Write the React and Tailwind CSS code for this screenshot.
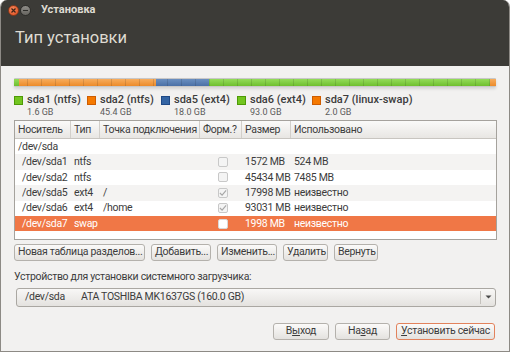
import React from 'react';

const font = { fontFamily: 'Roboto, "Noto Sans", sans-serif' };

const segments = [
  { w: 5, cls: 'bg-[linear-gradient(#94dc5a,#6fbf2e)]' },
  { w: 137, cls: 'bg-[linear-gradient(#f7ad5e,#ec8b2a)]' },
  { w: 53, cls: 'bg-[linear-gradient(#6b8fc0,#4a70a6)]' },
  { w: 281, cls: 'bg-[linear-gradient(#94dc5a,#6fbf2e)]' },
  { w: 6, cls: 'bg-[linear-gradient(#f7ad5e,#ec8b2a)]' },
];

const legend = [
  { name: 'sda1 (ntfs)', size: '1.6 GB', sq: 'bg-[#73c520] border-[#4e9a06]', w: 'w-[73px]' },
  { name: 'sda2 (ntfs)', size: '45.4 GB', sq: 'bg-[#f57900] border-[#ce5c00]', w: 'w-[74px]' },
  { name: 'sda5 (ext4)', size: '18.0 GB', sq: 'bg-[#3465a4] border-[#204a87]', w: 'w-[76px]' },
  { name: 'sda6 (ext4)', size: '93.0 GB', sq: 'bg-[#73c520] border-[#4e9a06]', w: 'w-[75px]' },
  { name: 'sda7 (linux-swap)', size: '2.0 GB', sq: 'bg-[#f57900] border-[#ce5c00]', w: 'w-[110px]' },
];

const rows = [
  { dev: '/dev/sda', top: true },
  { dev: '/dev/sda1', type: 'ntfs', mount: '', fmt: false, size: '1572 MB', used: '524 MB', stripe: true },
  { dev: '/dev/sda2', type: 'ntfs', mount: '', fmt: false, size: '45434 MB', used: '7485 MB' },
  { dev: '/dev/sda5', type: 'ext4', mount: '/', fmt: true, size: '17998 MB', used: 'неизвестно', stripe: true },
  { dev: '/dev/sda6', type: 'ext4', mount: '/home', fmt: true, size: '93031 MB', used: 'неизвестно' },
  { dev: '/dev/sda7', type: 'swap', mount: '', fmt: false, size: '1998 MB', used: 'неизвестно', sel: true },
];

const cols = 'grid grid-cols-[56px_29px_100px_42px_49px_1fr]';

function Check({ checked, sel }) {
  return (
    <div className={`w-[10px] h-[10px] rounded-[2px] border ${sel ? 'bg-white border-[#d8d8d8]' : 'bg-[#f4f4f4] border-[#c8c8c8]'} flex items-center justify-center`}>
      {checked && (
        <svg width="9" height="8" viewBox="0 0 9 8">
          <path d="M1 4 L3.5 6.5 L8 1" stroke="#a8a8a8" strokeWidth="1.3" fill="none" />
        </svg>
      )}
    </div>
  );
}

function Btn({ children, className = '' }) {
  return (
    <button className={`h-[17px] px-[3px] rounded-[3px] border border-[#b4b1ac] bg-[linear-gradient(#fbfaf9,#e4e2df)] text-[10.5px] leading-none text-[#3c3c3c] whitespace-nowrap ${className}`}>
      {children}
    </button>
  );
}

export default function App() {
  return (
    <div style={font} className="w-[510px] h-[352px] overflow-hidden rounded-t-[7px] bg-[#f2f1f0] border-x border-b border-[#8d8a85] flex flex-col tracking-[-0.3px]">
      {/* header */}
      <div className="h-[66px] bg-[#3c3b37] px-[7px] shrink-0">
        <div className="flex items-center h-[20px] pt-[1px]">
          <div className="w-[11px] h-[11px] rounded-full bg-[radial-gradient(circle_at_40%_35%,#f6895d,#df4b1c)] border border-[#8a3a1c] flex items-center justify-center">
            <svg width="5" height="5" viewBox="0 0 5 5"><path d="M0.5 0.5 L4.5 4.5 M4.5 0.5 L0.5 4.5" stroke="#3c2418" strokeWidth="1.2" /></svg>
          </div>
          <div className="w-[11px] h-[11px] ml-[1px] rounded-full bg-[linear-gradient(#8f8d88,#66645f)] border border-[#2f2e2b] flex items-center justify-center">
            <div className="w-[5px] h-[1.5px] bg-[#2e2d2a]" />
          </div>
          <span className="ml-[10px] text-[11px] font-bold text-[#dfdbd2] tracking-normal">Установка</span>
        </div>
        <div className="mt-[10px] ml-[7px] text-[16.5px] leading-none text-[#dfdbd2] tracking-normal">Тип установки</div>
      </div>

      {/* body */}
      <div className="px-[13px] flex flex-col">
        {/* partition bar */}
        <div className="mt-[12px] h-[9px] w-[482px] flex rounded-[1px] overflow-hidden border-y border-[#8a8a8a]/40 shadow-[0_2px_3px_rgba(0,0,0,0.12)] relative">
          {segments.map((s, i) => (
            <div key={i} className={`h-full ${s.cls}`} style={{ width: s.w }} />
          ))}
          <div className="absolute inset-0 bg-[repeating-linear-gradient(90deg,transparent_0,transparent_13px,rgba(0,0,0,0.12)_13px,rgba(0,0,0,0.12)_14px)]" />
        </div>

        {/* legend */}
        <div className="flex mt-[6px] h-[25px]">
          {legend.map((l, i) => (
            <div key={i} className={`flex ${l.w} shrink-0`}>
              <div className={`w-[9px] h-[9px] mt-[3px] border ${l.sq}`} />
              <div className="ml-[4px]">
                <div className="text-[11px] leading-[14px] font-medium text-[#3c3c3c] tracking-normal">{l.name}</div>
                <div className="text-[9px] leading-[10px] text-[#5a5a5a] tracking-normal">{l.size}</div>
              </div>
            </div>
          ))}
        </div>

        {/* table */}
        <div className="mt-[2px] w-[483px] h-[120px] border border-[#a5a29d] bg-white text-[10.5px] text-[#3c3c3c]">
          <div className={`${cols} h-[18px] bg-[linear-gradient(#fafaf9,#e8e6e3)] border-b border-[#c8c5c0]`}>
            {['Носитель', 'Тип', 'Точка подключения', 'Форм.?', 'Размер', 'Использовано'].map((h, i) => (
              <div key={i} className={`flex items-center px-[3px] whitespace-nowrap overflow-hidden ${i < 5 ? 'border-r border-[#d2cfca]' : ''}`}>{h}</div>
            ))}
          </div>
          {rows.map((r, i) => (
            <div
              key={i}
              className={`${cols} h-[15.4px] items-center whitespace-nowrap ${r.sel ? 'bg-[#f07746] text-white' : r.stripe ? 'bg-[#f4f3f2]' : 'bg-white'}`}
            >
              <div className={`overflow-hidden ${r.top ? 'pl-[3px]' : 'pl-[7px]'}`}>{r.dev}</div>
              <div className="pl-[3px] overflow-hidden">{r.type}</div>
              <div className="pl-[3px] overflow-hidden">{r.mount}</div>
              <div className="flex justify-center pl-[3px]">{!r.top && <Check checked={r.fmt} sel={r.sel} />}</div>
              <div className="pl-[3px] overflow-hidden">{r.size}</div>
              <div className="pl-[3px] overflow-hidden">{r.used}</div>
            </div>
          ))}
        </div>

        {/* partition buttons */}
        <div className="flex gap-[6px] mt-[4px]">
          <Btn className="w-[131px]">Новая таблица разделов...</Btn>
          <Btn className="w-[60px]">Добавить...</Btn>
          <Btn className="w-[60px]">Изменить...</Btn>
          <Btn className="w-[45px]">Удалить</Btn>
          <Btn className="w-[44px]">Вернуть</Btn>
        </div>

        {/* bootloader */}
        <div className="mt-[8px] text-[10.5px] text-[#3c3c3c]">Устройство для установки системного загрузчика:</div>
        <div className="mt-[3px] ml-[2px] w-[480px] h-[19px] rounded-[3px] border border-[#aaa7a2] bg-[linear-gradient(#f8f7f6,#e4e2df)] flex items-center text-[10.5px] text-[#3c3c3c]">
          <span className="pl-[8px] w-[64px]">/dev/sda</span>
          <span>ATA TOSHIBA MK1637GS (160.0 GB)</span>
          <div className="ml-auto h-[13px] border-l border-[#c4c1bc] w-[15px] flex items-center justify-center">
            <svg width="7" height="4" viewBox="0 0 7 4"><path d="M0.5 0.5 L6.5 0.5 L3.5 3.5 Z" fill="#4a4a4a" /></svg>
          </div>
        </div>

        {/* bottom buttons */}
        <div className="flex justify-end gap-[6px] mt-[16px] pr-[1px]">
          <Btn className="w-[56px]">В<u>ы</u>ход</Btn>
          <Btn className="w-[55px]">На<u>з</u>ад</Btn>
          <Btn className="w-[99px] bg-[linear-gradient(#f6b39a,#f09a7a)] border-[#e2825c]"><u>У</u>становить сейчас</Btn>
        </div>
      </div>
    </div>
  );
}
